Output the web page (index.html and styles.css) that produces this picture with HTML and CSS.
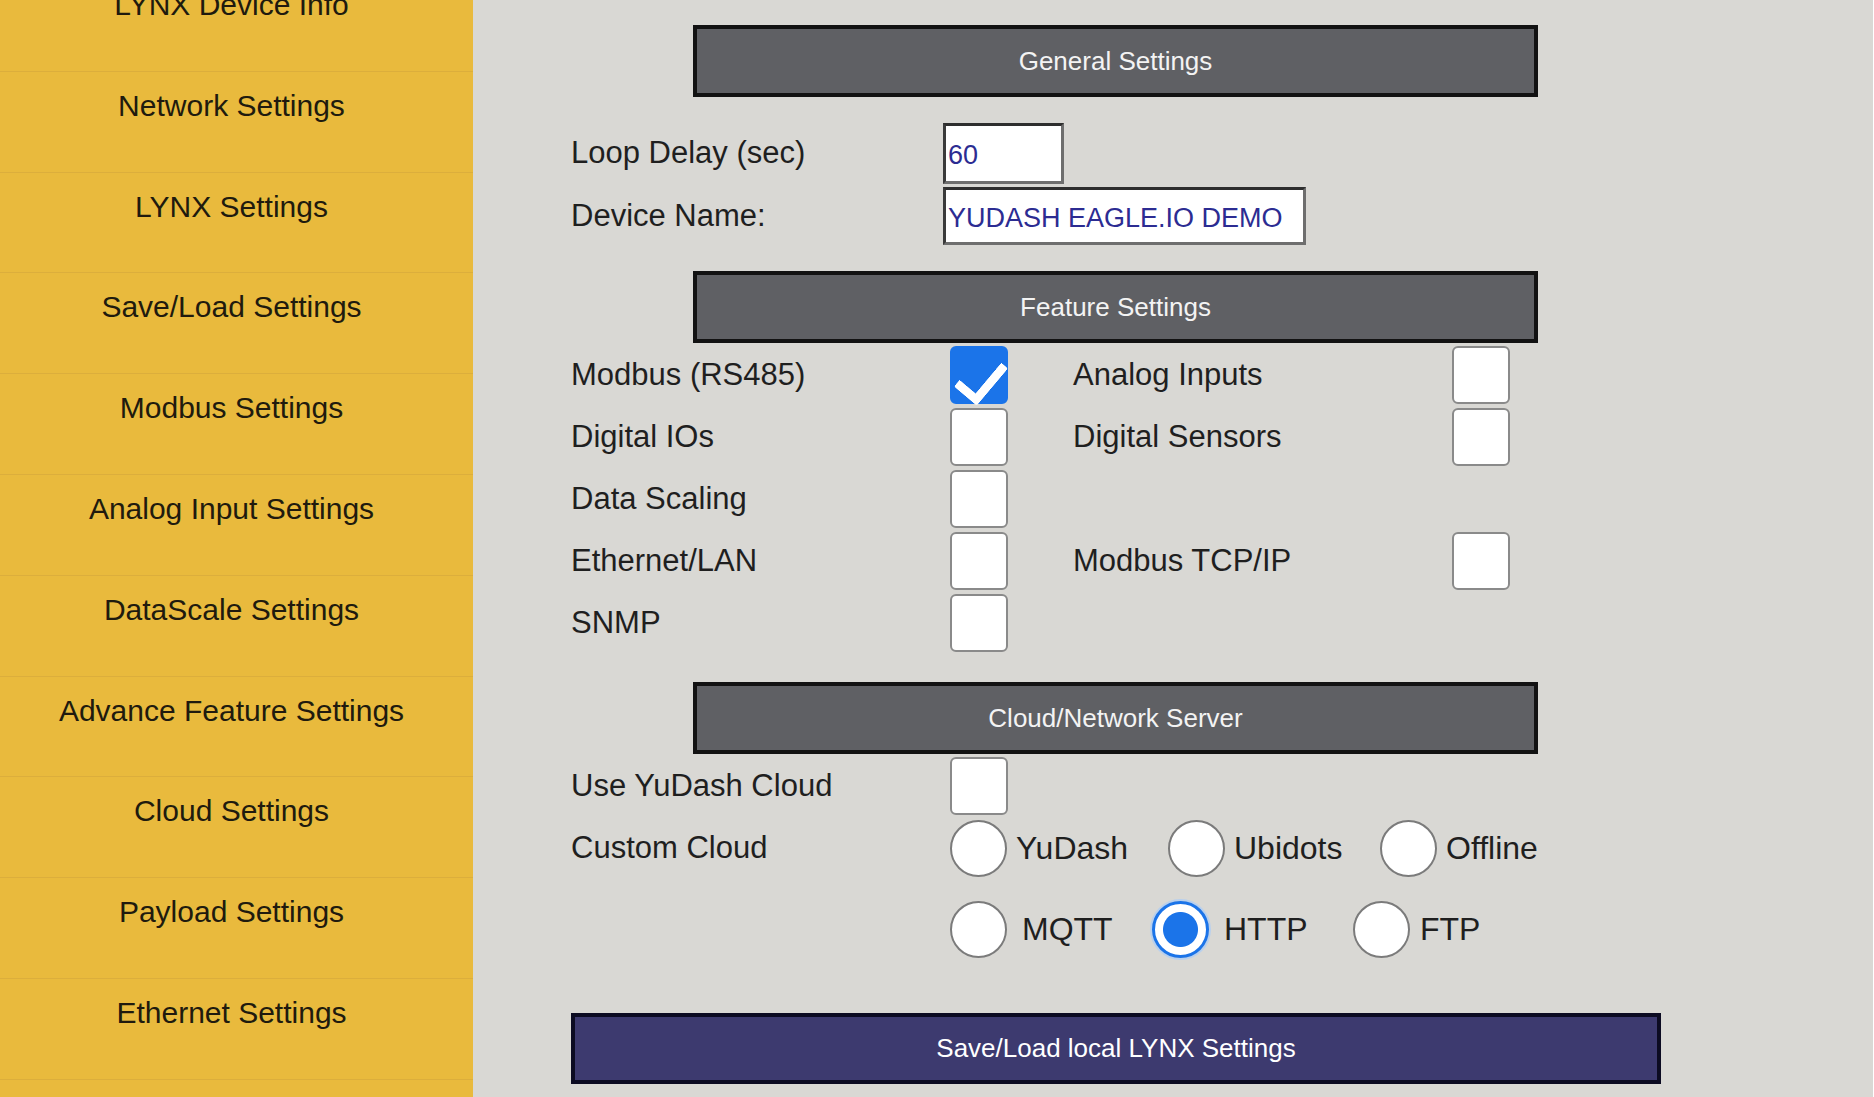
FILE: index.html
```html
<!DOCTYPE html>
<html lang="en">
<head>
<meta charset="utf-8">
<title>LYNX Settings</title>
<link rel="stylesheet" href="styles.css">
</head>
<body>
<div class="app">
  <nav class="sidebar">
    <ul class="nav">
      <li class="nav-item">LYNX Device Info</li>
      <li class="nav-item">Network Settings</li>
      <li class="nav-item">LYNX Settings</li>
      <li class="nav-item">Save/Load Settings</li>
      <li class="nav-item">Modbus Settings</li>
      <li class="nav-item">Analog Input Settings</li>
      <li class="nav-item">DataScale Settings</li>
      <li class="nav-item">Advance Feature Settings</li>
      <li class="nav-item">Cloud Settings</li>
      <li class="nav-item">Payload Settings</li>
      <li class="nav-item">Ethernet Settings</li>
      <li class="nav-item nav-item-empty"></li>
    </ul>
  </nav>
  <main class="main">
    <div class="panel">
      <div class="bar">General Settings</div>
      <div class="general">
        <div class="grow">
          <label class="lbl lbl-loop">Loop Delay (sec)</label>
          <input class="txt txt-loop" type="text" value="60">
        </div>
        <div class="grow grow-2">
          <label class="lbl lbl-dev">Device Name:</label>
          <input class="txt txt-dev" type="text" value="YUDASH EAGLE.IO DEMO">
        </div>
      </div>

      <div class="bar">Feature Settings</div>
      <div class="features">
        <span class="lbl">Modbus (RS485)</span><input class="cb" type="checkbox" checked><span></span>
        <span class="lbl">Analog Inputs</span><input class="cb" type="checkbox">
        <span class="lbl">Digital IOs</span><input class="cb" type="checkbox"><span></span>
        <span class="lbl">Digital Sensors</span><input class="cb" type="checkbox">
        <span class="lbl">Data Scaling</span><input class="cb" type="checkbox"><span></span>
        <span></span><span></span>
        <span class="lbl">Ethernet/LAN</span><input class="cb" type="checkbox"><span></span>
        <span class="lbl">Modbus TCP/IP</span><input class="cb" type="checkbox">
        <span class="lbl">SNMP</span><input class="cb" type="checkbox">
      </div>

      <div class="bar bar-cloud">Cloud/Network Server</div>
      <div class="cloud">
        <div class="crow">
          <span class="lbl">Use YuDash Cloud</span><input class="cb" type="checkbox">
        </div>
        <div class="crow crow-custom">
          <span class="lbl lbl-custom">Custom Cloud</span>
          <div class="radios">
            <div class="rrow rrow-1">
              <label class="opt"><input class="rd" type="radio" name="cloud"><span>YuDash</span></label>
              <label class="opt"><input class="rd" type="radio" name="cloud"><span>Ubidots</span></label>
              <label class="opt"><input class="rd" type="radio" name="cloud"><span>Offline</span></label>
            </div>
            <div class="rrow rrow-2">
              <label class="opt"><input class="rd" type="radio" name="proto"><span>MQTT</span></label>
              <label class="opt"><input class="rd rd-focus" type="radio" name="proto" checked><span>HTTP</span></label>
              <label class="opt opt-ftp"><input class="rd" type="radio" name="proto"><span>FTP</span></label>
            </div>
          </div>
        </div>
      </div>

      <button class="save" type="button">Save/Load local LYNX Settings</button>
    </div>
  </main>
</div>
</body>
</html>
```

FILE: styles.css
```css
* { box-sizing: border-box; }

html, body {
  margin: 0;
  padding: 0;
  height: 100%;
  overflow: hidden;
  font-family: "Liberation Sans", Arial, sans-serif;
}

.app {
  display: flex;
  height: 1097px;
}

/* ---------- sidebar ---------- */
.sidebar {
  width: 473px;
  flex: 0 0 473px;
  background: #e9ba3d;
  overflow: hidden;
}

.nav {
  list-style: none;
  margin: -29px 0 0 0;
  padding: 0;
}

.nav-item {
  height: 100.8px;
  padding: 16px 10px 0 0;
  border-bottom: 1px solid #dcae3c;
  text-align: center;
  font-size: 30px;
  line-height: 36px;
  color: #201a0e;
}

/* ---------- main ---------- */
.main {
  flex: 1;
  background: #d9d8d4;
  border-right: 1px solid #ffffff;
  padding: 25px 0 0 98px;
  color: #1f1f1f;
}

.panel {
  width: 1090px;
}

.bar {
  width: 845px;
  height: 72px;
  margin-left: 122px;
  border: 4px solid #121212;
  background: #5f6064;
  color: #f3f3f3;
  font-size: 26px;
  display: flex;
  align-items: center;
  justify-content: center;
}

.lbl {
  font-size: 31px;
  line-height: 36px;
  color: #1f1f1f;
  white-space: nowrap;
}

/* general */
.general {
  margin-top: 26px;
  margin-bottom: 26px;
}

.grow {
  display: grid;
  grid-template-columns: 372px auto;
  align-items: start;
}

.grow-2 {
  margin-top: 3px;
}

.lbl-loop { margin-top: 12px; }
.lbl-dev { margin-top: 11px; }

.txt {
  font-family: "Liberation Sans", Arial, sans-serif;
  font-size: 27px;
  color: #2c2c92;
  background: #ffffff;
  border-style: solid;
  border-width: 3px;
  border-color: #2e2e2e #6e6e6e #6e6e6e #3a3a3a;
  padding: 4px 0 0 2px;
  margin: 0;
  outline: none;
}

.txt-loop {
  width: 121px;
  height: 61px;
}

.txt-dev {
  width: 363px;
  height: 58px;
}

/* features */
.features {
  margin-top: 3px;
  display: grid;
  grid-template-columns: 379px 58px 65px 379px 58px;
  grid-auto-rows: 58px;
  row-gap: 4px;
  align-items: center;
  margin-bottom: 30px;
}

.cb {
  appearance: none;
  -webkit-appearance: none;
  position: relative;
  width: 58px;
  height: 58px;
  margin: 0;
  background: #ffffff;
  border: 2px solid #8a8a8a;
  border-radius: 6px;
}

.cb:checked {
  background: #1b74e9;
  border-color: #1b74e9;
}

.cb:checked::after {
  content: "";
  position: absolute;
  left: 14px;
  top: 5px;
  width: 21px;
  height: 40px;
  border: solid #ffffff;
  border-width: 0 9px 9px 0;
  border-radius: 3px;
  transform: rotate(40deg);
}

/* cloud */
.cloud {
  margin-top: 3px;
}

.crow {
  display: grid;
  grid-template-columns: 379px auto;
  align-items: center;
}

.crow-custom {
  margin-top: 5px;
  align-items: start;
}

.lbl-custom {
  margin-top: 10px;
}

.rrow {
  display: grid;
  align-items: center;
  height: 57px;
}

.rrow-1 {
  grid-template-columns: 218px 212px auto;
}

.rrow-2 {
  margin-top: 24px;
  grid-template-columns: 202px 201px auto;
}

.opt {
  display: flex;
  align-items: center;
  gap: 9px;
  font-size: 32px;
  color: #1f1f1f;
}

.rrow-2 .opt {
  gap: 15px;
}

.rrow-2 .opt-ftp {
  gap: 10px;
}

.rd {
  appearance: none;
  -webkit-appearance: none;
  width: 57px;
  height: 57px;
  margin: 0;
  border: 2px solid #7b7b7b;
  border-radius: 50%;
  background: #ffffff;
  flex: 0 0 auto;
}

.rd:checked {
  border: 3px solid #1b74e9;
  background: radial-gradient(circle, #1b74e9 0 17px, #ffffff 18px);
  box-shadow: 0 0 0 2px #b8d0ee;
}

/* save */
.save {
  display: block;
  margin-top: 55px;
  width: 1090px;
  height: 71px;
  border: 4px solid #0c0b22;
  background: #3d3a6f;
  color: #ffffff;
  font-family: "Liberation Sans", Arial, sans-serif;
  font-size: 26px;
  padding: 0;
}
```
